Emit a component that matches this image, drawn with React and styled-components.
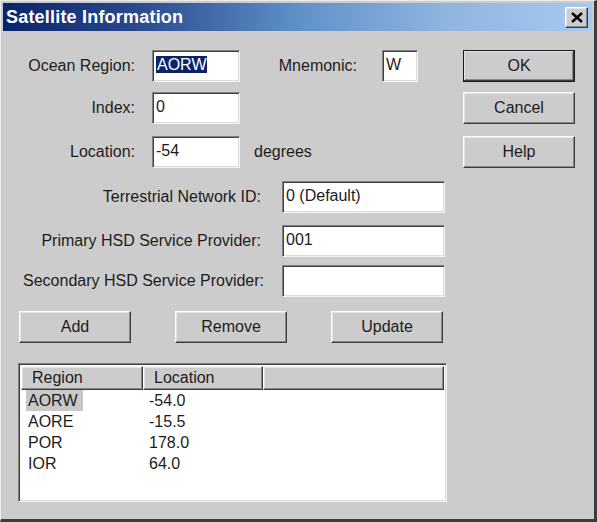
import React from "react";
import styled, { createGlobalStyle, css } from "styled-components";

const GlobalStyle = createGlobalStyle`
  html, body {
    margin: 0;
    padding: 0;
    background: #cccccc;
  }
  body {
    font-family: "Liberation Sans", Arial, sans-serif;
    font-size: 16px;
    color: #1c1c1c;
  }
  * { box-sizing: border-box; }
`;

const Window = styled.div`
  width: 597px;
  height: 522px;
  background: #cccccc;
  border-top: 1px solid #ececec;
  border-left: 1px solid #ececec;
  border-right: 3px solid #3c3c3c;
  border-bottom: 3px solid #3c3c3c;
  padding: 2px;
  display: flex;
  flex-direction: column;
`;

const TitleBar = styled.div`
  height: 28px;
  display: flex;
  align-items: center;
  justify-content: space-between;
  padding: 0 4px 0 3px;
  background: linear-gradient(90deg, #0a246a 0%, #28488c 22%, #5e90c8 50%, #8fb4e0 75%, #a6caf0 100%);
`;

const Title = styled.span`
  color: #fff;
  font-weight: bold;
  font-size: 18px;
  letter-spacing: 0.2px;
`;

const raised = css`
  background: #cccccc;
  border: 1px solid;
  border-color: #ffffff #3c3c3c #3c3c3c #ffffff;
  box-shadow: inset -1px -1px 0 #888888, inset 1px 1px 0 #e4e4e4;
`;

const CloseButton = styled.div`
  ${raised};
  width: 23px;
  height: 21px;
  display: flex;
  align-items: center;
  justify-content: center;
`;

const Body = styled.div`
  display: flex;
  padding: 19px 0 0 16px;
`;

const Main = styled.div`
  width: 428px;
  display: flex;
  flex-direction: column;
`;

const Side = styled.div`
  margin-left: 16px;
  display: flex;
  flex-direction: column;
`;

const Row = styled.div`
  display: flex;
  align-items: center;
  height: 32px;
  margin-top: ${(p) => p.$top || 0}px;
`;

const Label = styled.span`
  width: ${(p) => p.$w}px;
  text-align: right;
  margin-right: ${(p) => p.$gap}px;
  white-space: nowrap;
`;

const Suffix = styled.span`
  margin-left: 14px;
`;

const Field = styled.div`
  width: ${(p) => p.$w}px;
  height: 32px;
  background: #fff;
  border: 1px solid;
  border-color: #808080 #f4f4f4 #f4f4f4 #808080;
  box-shadow: inset 1px 1px 0 #404040, inset -1px -1px 0 #dcdcdc;
  padding: 3px 0 0 3px;
  line-height: 22px;
  white-space: nowrap;
  overflow: hidden;
`;

const Selected = styled.span`
  background: #0a246a;
  color: #fff;
  padding: 0 1px;
`;

const Button = styled.div`
  ${raised};
  width: 112px;
  height: 32px;
  display: flex;
  align-items: center;
  justify-content: center;
  margin-top: ${(p) => p.$top || 0}px;
  ${(p) =>
    p.$default &&
    css`
      outline: 1px solid #1a1a1a;
      outline-offset: -1px;
      border-color: #ffffff #1a1a1a #1a1a1a #ffffff;
      box-shadow: inset -1px -1px 0 #3c3c3c, inset 1px 1px 0 #e4e4e4, inset -2px -2px 0 #888;
    `}
`;

const ButtonRow = styled.div`
  display: flex;
  gap: 44px;
  margin-top: 14px;
`;

const ListView = styled.div`
  margin: 20px 0 0 -1px;
  width: 429px;
  height: 139px;
  background: #fff;
  border: 1px solid;
  border-color: #808080 #f4f4f4 #f4f4f4 #808080;
  box-shadow: inset 1px 1px 0 #404040, inset -1px -1px 0 #dcdcdc;
  padding: 2px;
  display: flex;
  flex-direction: column;
`;

const Header = styled.div`
  display: flex;
  height: 24px;
  flex: none;
`;

const HeaderCell = styled.div`
  ${raised};
  width: ${(p) => (p.$w ? `${p.$w}px` : "auto")};
  flex: ${(p) => (p.$w ? "none" : 1)};
  padding-left: 10px;
  line-height: 21px;
`;

const ListRow = styled.div`
  display: flex;
  height: 21px;
  line-height: 21px;
  &:first-of-type {
    margin-top: 1px;
  }
`;

const Cell = styled.div`
  width: ${(p) => p.$w}px;
  padding-left: ${(p) => p.$pad}px;
`;

const Highlight = styled.span`
  display: inline-block;
  background: ${(p) => (p.$on ? "#c8c8c8" : "transparent")};
  padding: 0 6px 0 2px;
  margin-left: -2px;
`;

const regions = [
  ["AORW", "-54.0"],
  ["AORE", "-15.5"],
  ["POR", "178.0"],
  ["IOR", "64.0"],
];

export default function App() {
  return (
    <>
      <GlobalStyle />
      <Window>
        <TitleBar>
          <Title>Satellite Information</Title>
          <CloseButton>
            <svg width="12" height="11" viewBox="0 0 12 11">
              <path d="M1 1 L11 10 M11 1 L1 10" stroke="#000" strokeWidth="2.4" />
            </svg>
          </CloseButton>
        </TitleBar>
        <Body>
          <Main>
            <Row>
              <Label $w={116} $gap={17}>Ocean Region:</Label>
              <Field $w={88}>
                <Selected>AORW</Selected>
              </Field>
              <Label $w={117} $gap={25}>Mnemonic:</Label>
              <Field $w={36}>W</Field>
            </Row>
            <Row $top={10}>
              <Label $w={116} $gap={17}>Index:</Label>
              <Field $w={88}>0</Field>
            </Row>
            <Row $top={12}>
              <Label $w={116} $gap={17}>Location:</Label>
              <Field $w={88}>-54</Field>
              <Suffix>degrees</Suffix>
            </Row>
            <Row $top={13}>
              <Label $w={242} $gap={21}>Terrestrial Network ID:</Label>
              <Field $w={163}>0 (Default)</Field>
            </Row>
            <Row $top={12}>
              <Label $w={242} $gap={21}>Primary HSD Service Provider:</Label>
              <Field $w={163}>001</Field>
            </Row>
            <Row $top={8}>
              <Label $w={245} $gap={18}>Secondary HSD Service Provider:</Label>
              <Field $w={163} />
            </Row>
            <ButtonRow>
              <Button>Add</Button>
              <Button>Remove</Button>
              <Button>Update</Button>
            </ButtonRow>
            <ListView>
              <Header>
                <HeaderCell $w={122}>Region</HeaderCell>
                <HeaderCell $w={120}>Location</HeaderCell>
                <HeaderCell />
              </Header>
              {regions.map(([r, l], i) => (
                <ListRow key={r}>
                  <Cell $w={122} $pad={7}>
                    <Highlight $on={i === 0}>{r}</Highlight>
                  </Cell>
                  <Cell $w={120} $pad={6}>{l}</Cell>
                </ListRow>
              ))}
            </ListView>
          </Main>
          <Side>
            <Button $default>OK</Button>
            <Button $top={10}>Cancel</Button>
            <Button $top={12}>Help</Button>
          </Side>
        </Body>
      </Window>
    </>
  );
}
